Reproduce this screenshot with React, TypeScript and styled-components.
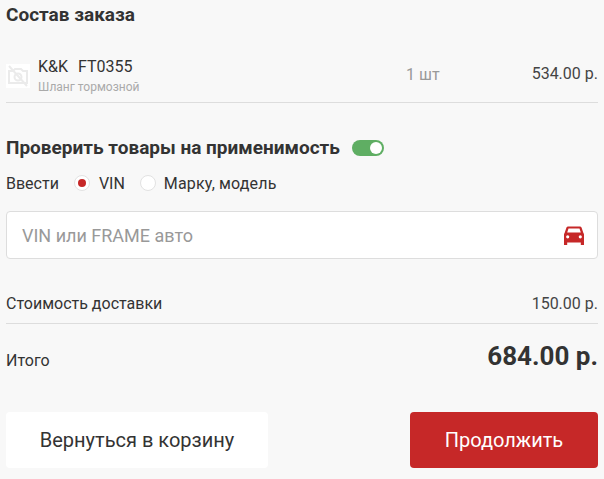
import React from 'react';
import styled, { createGlobalStyle } from 'styled-components';

const Global = createGlobalStyle`
  html, body {
    margin: 0;
    padding: 0;
    background: #f8f8f8;
  }
  body {
    font-family: Roboto, "Liberation Sans", sans-serif;
    color: #333;
  }
`;

const Page = styled.div`
  width: 604px;
  height: 479px;
  box-sizing: border-box;
  padding: 0 6px;
  overflow: hidden;
  display: flex;
  flex-direction: column;
`;

const Heading = styled.h3`
  margin: 0;
  font-size: 19px;
  line-height: 22px;
  font-weight: 700;
  color: #333;
`;

const OrderTitle = styled(Heading)`
  padding-top: 4px;
  height: 25px;
`;

const OrderRow = styled.div`
  margin-top: 23px;
  height: 51px;
  box-sizing: border-box;
  border-bottom: 1px solid #ddd;
  display: flex;
  align-items: flex-start;
`;

const Thumb = styled.div`
  width: 24px;
  height: 24px;
  margin-top: 12px;
  background: #fff;
  display: flex;
  align-items: center;
  justify-content: center;
`;

const ItemInfo = styled.div`
  margin-left: 8px;
  width: 338px;
`;

const ItemName = styled.div`
  font-size: 16px;
  line-height: 20px;
  margin-top: 5px;
  white-space: pre;
  word-spacing: 1px;
  color: #333;
`;

const ItemSub = styled.div`
  font-size: 12px;
  line-height: 14px;
  margin-top: 3px;
  color: #aaa;
`;

const Qty = styled.div`
  margin-left: 30px;
  margin-top: 13px;
  font-size: 16px;
  line-height: 20px;
  color: #999;
`;

const RowPrice = styled.div`
  margin-left: auto;
  margin-top: 12px;
  font-size: 16px;
  line-height: 20px;
  color: #444;
`;

const CheckRow = styled.div`
  margin-top: 33px;
  display: flex;
  align-items: center;
  height: 24px;
`;

const Toggle = styled.div`
  margin-left: 12px;
  width: 32px;
  height: 16px;
  border-radius: 8px;
  background: #5fae63;
  display: flex;
  align-items: center;
  justify-content: flex-end;
  padding-right: 2px;
  box-sizing: border-box;
`;

const Knob = styled.div`
  width: 12px;
  height: 12px;
  border-radius: 50%;
  background: #fff;
`;

const RadioRow = styled.div`
  margin-top: 11px;
  height: 24px;
  display: flex;
  align-items: center;
  font-size: 16px;
  color: #333;
`;

const RadioLabel = styled.span<{ $gap: number }>`
  margin-right: ${(p) => p.$gap}px;
`;

const WideLabel = styled(RadioLabel)`
  letter-spacing: 0.15px;
`;

const Radio = styled.span<{ $on?: boolean }>`
  width: 16px;
  height: 16px;
  box-sizing: border-box;
  border-radius: 50%;
  background: #fff;
  border: 1px solid #e2e2e2;
  margin-right: ${(p) => (p.$on ? 9 : 8)}px;
  display: flex;
  align-items: center;
  justify-content: center;
  &::after {
    content: '';
    width: 8px;
    height: 8px;
    border-radius: 50%;
    background: ${(p) => (p.$on ? '#c62828' : 'transparent')};
  }
`;

const VinField = styled.div`
  margin-top: 16px;
  height: 48px;
  box-sizing: border-box;
  background: #fff;
  border: 1px solid #ddd;
  border-radius: 4px;
  display: flex;
  align-items: center;
  justify-content: space-between;
  padding: 0 13px 0 15px;
`;

const Placeholder = styled.span`
  font-size: 18px;
  color: #999;
`;

const CostRow = styled.div`
  margin-top: 34px;
  height: 31px;
  box-sizing: border-box;
  border-bottom: 1px solid #ddd;
  display: flex;
  justify-content: space-between;
  font-size: 16px;
  line-height: 22px;
`;

const CostValue = styled.span`
  font-size: 16px;
  color: #444;
`;

const TotalRow = styled.div`
  height: 66px;
  box-sizing: border-box;
  padding-top: 17px;
  display: flex;
  justify-content: space-between;
  align-items: flex-start;
  font-size: 16px;
`;

const TotalLabel = styled.span`
  margin-top: 10px;
`;

const TotalValue = styled.span`
  font-size: 26px;
  font-weight: 700;
  color: #333;
`;

const Actions = styled.div`
  margin-top: 22px;
  display: flex;
  justify-content: space-between;
`;

const Button = styled.div<{ $primary?: boolean }>`
  height: 56px;
  width: ${(p) => (p.$primary ? 188 : 262)}px;
  border-radius: 4px;
  display: flex;
  align-items: center;
  justify-content: center;
  font-size: 20px;
  background: ${(p) => (p.$primary ? '#c62828' : '#fff')};
  color: ${(p) => (p.$primary ? '#fff' : '#333')};
`;

const NoImage = () => (
  <svg width="24" height="24" viewBox="0 0 24 24" fill="none" stroke="#ebebeb" strokeWidth="2">
    <path d="M3 2l18 20" />
    <path d="M3 7h4l2-2h6l2 2h4v12H3z" />
    <circle cx="12" cy="13" r="3.5" />
  </svg>
);

const Car = () => (
  <svg width="20" height="19" viewBox="0 0 20 19" fill="#c62828">
    <path d="M4.2 0.5h11.6c.9 0 1.6.6 1.9 1.4L19.4 7c.4.4.6.9.6 1.5V19h-3.2v-2.5H3.2V19H0V8.500c0-.6.2-1.100.6-1.500L2.300 1.900C2.600 1.100 3.300.5 4.200.5z M4.500 2.500L3.200 6.500h13.600L15.500 2.500z M3.700 9.200a1.600 1.600 0 1 0 0 3.200 1.600 1.600 0 0 0 0-3.200z M16.300 9.200a1.600 1.600 0 1 0 0 3.200 1.600 1.600 0 0 0 0-3.200z" fillRule="evenodd" />
  </svg>
);

export default function App() {
  return (
    <Page>
      <Global />
      <OrderTitle>Состав заказа</OrderTitle>
      <OrderRow>
        <Thumb>
          <NoImage />
        </Thumb>
        <ItemInfo>
          <ItemName>{'K&K  FT0355'}</ItemName>
          <ItemSub>Шланг тормозной</ItemSub>
        </ItemInfo>
        <Qty>1 шт</Qty>
        <RowPrice>534.00 р.</RowPrice>
      </OrderRow>
      <CheckRow>
        <Heading>Проверить товары на применимость</Heading>
        <Toggle>
          <Knob />
        </Toggle>
      </CheckRow>
      <RadioRow>
        <RadioLabel $gap={15}>Ввести</RadioLabel>
        <Radio $on />
        <RadioLabel $gap={15}>VIN</RadioLabel>
        <Radio />
        <WideLabel $gap={0}>Марку, модель</WideLabel>
      </RadioRow>
      <VinField>
        <Placeholder>VIN или FRAME авто</Placeholder>
        <Car />
      </VinField>
      <CostRow>
        <span>Стоимость доставки</span>
        <CostValue>150.00 р.</CostValue>
      </CostRow>
      <TotalRow>
        <TotalLabel>Итого</TotalLabel>
        <TotalValue>684.00 р.</TotalValue>
      </TotalRow>
      <Actions>
        <Button>Вернуться в корзину</Button>
        <Button $primary>Продолжить</Button>
      </Actions>
    </Page>
  );
}
